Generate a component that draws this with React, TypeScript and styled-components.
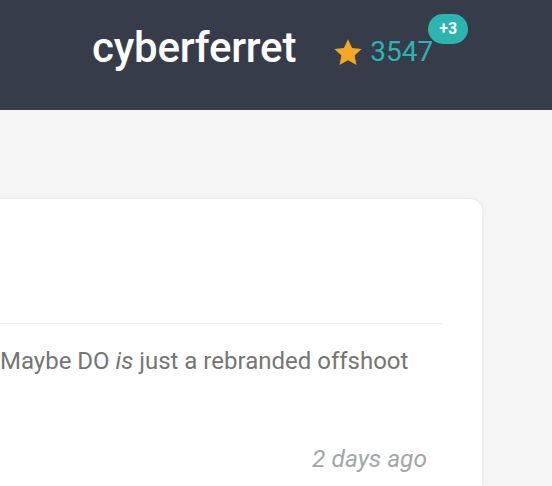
import React from "react";
import styled, { createGlobalStyle } from "styled-components";

const Global = createGlobalStyle`
  html, body { margin: 0; padding: 0; background: #f5f5f5; overflow: hidden; }
  body { font-family: Roboto, "Liberation Sans", sans-serif; }
`;

const Page = styled.div`
  width: 552px;
  height: 486px;
  display: flex;
  flex-direction: column;
  background: #f5f5f5;
  overflow: hidden;
`;

const Header = styled.header`
  height: 110px;
  flex-shrink: 0;
  background: #363c4a;
  display: flex;
  align-items: center;
  padding-left: 92px;
  box-sizing: border-box;
`;

const Title = styled.h1`
  margin: 0;
  font-size: 42px;
  font-weight: 500;
  color: #ffffff;
  letter-spacing: -0.2px;
  line-height: 1;
  padding-bottom: 14px;
`;

const Stars = styled.div`
  position: relative;
  display: flex;
  align-items: center;
  margin-left: 37px;
  gap: 7px;
  padding-bottom: 6px;
`;

const Count = styled.span`
  font-size: 28px;
  color: #2ab5b1;
  line-height: 1;
`;

const Badge = styled.span`
  position: absolute;
  left: 95px;
  top: -24px;
  width: 40px;
  height: 30px;
  border-radius: 15px;
  background: #2ab5b1;
  color: #fff;
  font-weight: 700;
  font-size: 16px;
  display: flex;
  align-items: center;
  justify-content: center;
`;

const Main = styled.main`
  flex: 1;
  padding-top: 89px;
  display: flex;
`;

const Card = styled.section`
  margin-left: -40px;
  width: 522px;
  flex-shrink: 0;
  background: #fff;
  border-radius: 12px 12px 0 0;
  box-shadow: 0 0 4px rgba(0, 0, 0, 0.08);
  padding: 124px 40px 0 40px;
  box-sizing: border-box;
`;

const Divider = styled.hr`
  margin: 0;
  border: 0;
  border-top: 1px solid #ededed;
`;

const Body = styled.p`
  margin: 22px 0 0;
  font-size: 24px;
  color: #757575;
  line-height: 30px;
`;

const Footer = styled.div`
  display: flex;
  justify-content: flex-end;
  padding-right: 15px;
  margin-top: 68px;
`;

const Time = styled.span`
  font-size: 24.5px;
  font-style: italic;
  color: #a2a6aa;
`;

const Star = () => (
  <svg width="30" height="29" viewBox="0 0 24 23">
    <path
      d="M12 0.8l3.3 7 7.6.9-5.6 5.2 1.5 7.6L12 17.7l-6.8 3.8 1.5-7.6L1.1 8.7l7.6-.9z"
      fill="#f5a623"
    />
  </svg>
);

export default function App() {
  return (
    <Page>
      <Global />
      <Header>
        <Title>cyberferret</Title>
        <Stars>
          <Star />
          <Count>3547</Count>
          <Badge>+3</Badge>
        </Stars>
      </Header>
      <Main>
        <Card>
          <Divider />
          <Body>
            Maybe DO <em>is</em> just a rebranded offshoot
          </Body>
          <Footer>
            <Time>2 days ago</Time>
          </Footer>
        </Card>
      </Main>
    </Page>
  );
}
